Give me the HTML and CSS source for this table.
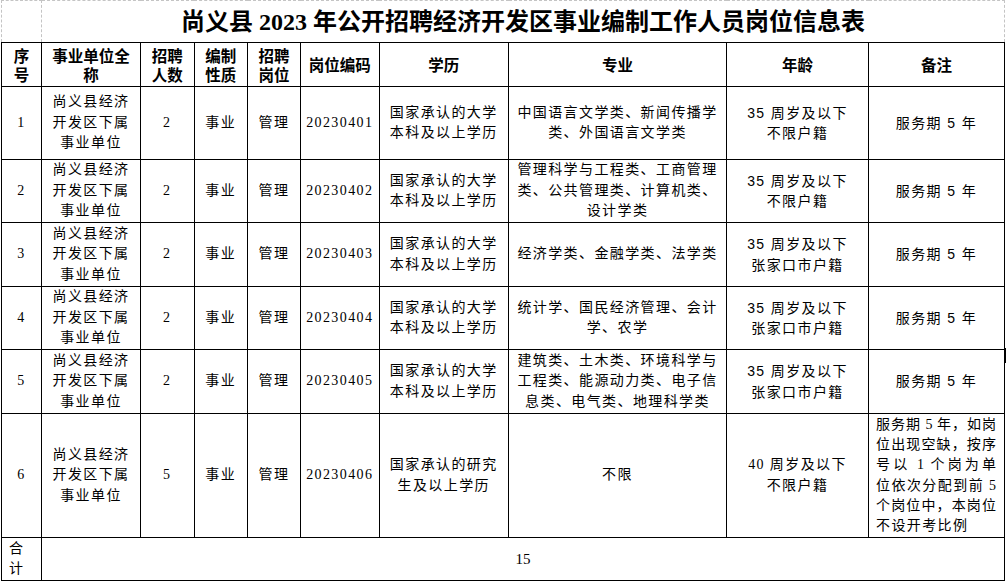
FILE: index.html
```html
<!DOCTYPE html>
<html lang="zh-CN">
<head>
<meta charset="utf-8">
<title>尚义县2023年公开招聘经济开发区事业编制工作人员岗位信息表</title>
<link rel="stylesheet" href="styles.css">
</head>
<body>
<div class="sheet">
  <table class="grid">
    <colgroup>
      <col class="c-no"><col class="c-unit"><col class="c-num"><col class="c-type"><col class="c-post">
      <col class="c-code"><col class="c-edu"><col class="c-major"><col class="c-age"><col class="c-note">
    </colgroup>
    <tr class="r-title">
      <td class="corner"></td>
      <td class="title" colspan="9">尚义县 2023 年公开招聘经济开发区事业编制工作人员岗位信息表</td>
    </tr>
    <tr class="r-head">
      <th>序<br>号</th><th>事业单位全<br>称</th><th>招聘<br>人数</th><th>编制<br>性质</th><th>招聘<br>岗位</th>
      <th>岗位编码</th><th>学历</th><th>专业</th><th>年龄</th><th>备注</th>
    </tr>
    <tr class="body h73">
      <td>1</td><td>尚义县经济<br>开发区下属<br>事业单位</td><td>2</td><td>事业</td><td>管理</td><td>20230401</td>
      <td>国家承认的大学<br>本科及以上学历</td>
      <td>中国语言文学类、新闻传播学<br>类、外国语言文学类</td>
      <td class="sf">35 周岁及以下<br>不限户籍</td><td class="sf">服务期 5 年</td>
    </tr>
    <tr class="body h63">
      <td>2</td><td>尚义县经济<br>开发区下属<br>事业单位</td><td>2</td><td>事业</td><td>管理</td><td>20230402</td>
      <td>国家承认的大学<br>本科及以上学历</td>
      <td>管理科学与工程类、工商管理<br>类、公共管理类、计算机类、<br>设计学类</td>
      <td class="sf">35 周岁及以下<br>不限户籍</td><td class="sf">服务期 5 年</td>
    </tr>
    <tr class="body h64">
      <td>3</td><td>尚义县经济<br>开发区下属<br>事业单位</td><td>2</td><td>事业</td><td>管理</td><td>20230403</td>
      <td>国家承认的大学<br>本科及以上学历</td>
      <td>经济学类、金融学类、法学类</td>
      <td class="sf">35 周岁及以下<br>张家口市户籍</td><td class="sf">服务期 5 年</td>
    </tr>
    <tr class="body h63">
      <td>4</td><td>尚义县经济<br>开发区下属<br>事业单位</td><td>2</td><td>事业</td><td>管理</td><td>20230404</td>
      <td>国家承认的大学<br>本科及以上学历</td>
      <td>统计学、国民经济管理、会计<br>学、农学</td>
      <td class="sf">35 周岁及以下<br>张家口市户籍</td><td class="sf">服务期 5 年</td>
    </tr>
    <tr class="body h64">
      <td>5</td><td>尚义县经济<br>开发区下属<br>事业单位</td><td>2</td><td>事业</td><td>管理</td><td>20230405</td>
      <td>国家承认的大学<br>本科及以上学历</td>
      <td>建筑类、土木类、环境科学与<br>工程类、能源动力类、电子信<br>息类、电气类、地理科学类</td>
      <td class="sf">35 周岁及以下<br>张家口市户籍</td><td class="sf">服务期 5 年</td>
    </tr>
    <tr class="body h124">
      <td>6</td><td>尚义县经济<br>开发区下属<br>事业单位</td><td>5</td><td>事业</td><td>管理</td><td>20230406</td>
      <td>国家承认的研究<br>生及以上学历</td>
      <td>不限</td>
      <td>40 周岁及以下<br>不限户籍</td>
      <td class="note">
        <div class="jl">服务期 5 年，如岗</div>
        <div class="jl">位出现空缺，按序</div>
        <div class="jl">号以 1 个岗为单</div>
        <div class="jl">位依次分配到前 5</div>
        <div class="jl">个岗位中，本岗位</div>
        <div class="ll">不设开考比例</div>
      </td>
    </tr>
    <tr class="body h43">
      <td class="total-label">合<br>计</td>
      <td class="total-num" colspan="9">15</td>
    </tr>
  </table>
  <div class="edge-mark"></div>
</div>
</body>
</html>
```

FILE: styles.css
```css
html, body {
  margin: 0;
  padding: 0;
  background: #ffffff;
}

body {
  font-family: "Liberation Serif", "Noto Sans CJK SC", serif;
  color: #000000;
}

.sheet {
  position: relative;
  width: 1006px;
  height: 582px;
  padding-left: 1px;
  box-sizing: border-box;
  overflow: hidden;
}

.grid {
  border-collapse: collapse;
  table-layout: fixed;
  width: 1003px;
}

.c-no { width: 40px; }
.c-unit { width: 99px; }
.c-num { width: 53.5px; }
.c-type { width: 53.5px; }
.c-post { width: 53px; }
.c-code { width: 78.5px; }
.c-edu { width: 129.5px; }
.c-major { width: 218px; }
.c-age { width: 142px; }
.c-note { width: 136px; }

.grid td,
.grid th {
  padding: 0;
  text-align: center;
  vertical-align: middle;
}

/* title row */
.r-title {
  height: 42px;
}

.r-title td {
  border-top: 1px dashed #c4c4c4;
}

.corner {
  border-left: 1px dashed #c4c4c4;
  border-right: 1px dashed #c4c4c4;
}

.title {
  border-right: 1px dashed #c4c4c4;
  font-size: 24px;
  font-weight: 700;
  line-height: 30px;
  padding-bottom: 3px;
  white-space: nowrap;
}

/* header row */
.r-head {
  height: 44px;
}

.r-head th {
  border: 1px solid #000000;
  font-family: "Noto Sans CJK SC", sans-serif;
  font-size: 15.5px;
  font-weight: 700;
  line-height: 19px;
}

/* body rows */
.body td {
  border: 1px solid #000000;
  font-size: 14px;
  letter-spacing: 1.4px;
  line-height: 20.5px;
}

.body .sf {
  font-family: "Liberation Sans", "Noto Sans CJK SC", sans-serif;
}

.h73 { height: 73px; }
.h63 { height: 63px; }
.h64 { height: 64px; }
.h124 { height: 124px; }
.h43 { height: 43px; }

.body .note {
  padding: 0 8px 0 7px;
  line-height: 20.3px;
  letter-spacing: 0;
}

.jl {
  text-align: justify;
  text-align-last: justify;
}

.ll {
  text-align: left;
  letter-spacing: 1.4px;
}

.body .total-label {
  text-align: left;
  padding-left: 7px;
  line-height: 20.5px;
  letter-spacing: 0;
}

.body .total-num {
  font-size: 15px;
  letter-spacing: 0;
}

.edge-mark {
  position: absolute;
  left: 1004px;
  top: 348px;
  width: 2px;
  height: 15px;
  background: #000000;
}
```
